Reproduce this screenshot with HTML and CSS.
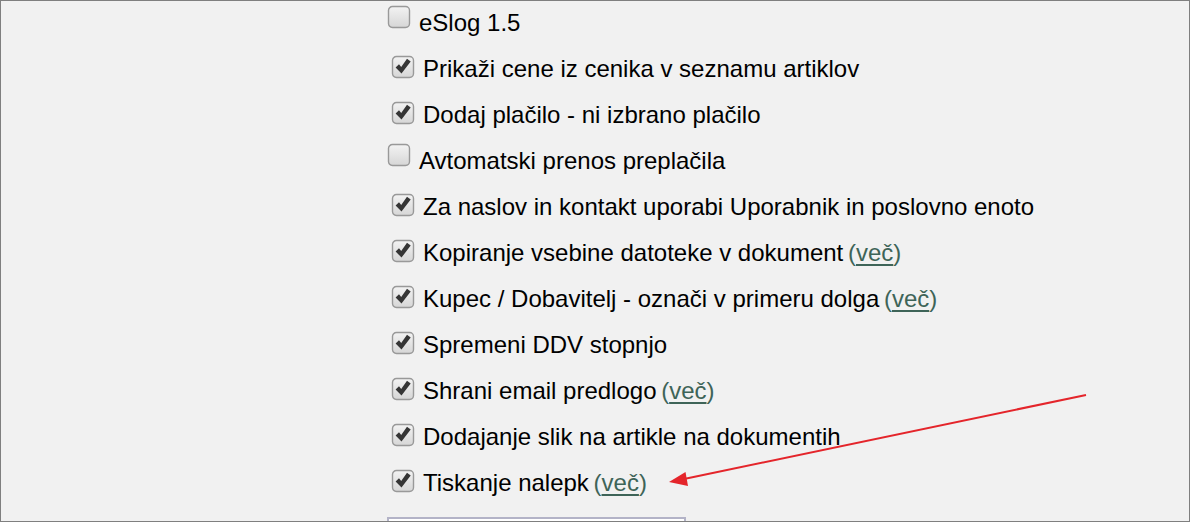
FILE: index.html
```html
<!DOCTYPE html>
<html lang="sl">
<head>
<meta charset="utf-8">
<title>Nastavitve</title>
<link rel="stylesheet" href="styles.css">
</head>
<body>
<div class="frame">
  <ul class="options">
    <li class="opt off"><svg class="cb" viewBox="0 0 24 24"><use href="#box"/></svg><span>eSlog 1.5</span></li>
    <li class="opt on"><svg class="cb" viewBox="0 0 24 24"><use href="#box"/><use href="#tick"/></svg><span>Prikaži cene iz cenika v seznamu artiklov</span></li>
    <li class="opt on"><svg class="cb" viewBox="0 0 24 24"><use href="#box"/><use href="#tick"/></svg><span>Dodaj plačilo - ni izbrano plačilo</span></li>
    <li class="opt off"><svg class="cb" viewBox="0 0 24 24"><use href="#box"/></svg><span>Avtomatski prenos preplačila</span></li>
    <li class="opt on"><svg class="cb" viewBox="0 0 24 24"><use href="#box"/><use href="#tick"/></svg><span>Za naslov in kontakt uporabi Uporabnik in poslovno enoto</span></li>
    <li class="opt on"><svg class="cb" viewBox="0 0 24 24"><use href="#box"/><use href="#tick"/></svg><span>Kopiranje vsebine datoteke v dokument <a class="more" href="#">(<u>več</u>)</a></span></li>
    <li class="opt on"><svg class="cb" viewBox="0 0 24 24"><use href="#box"/><use href="#tick"/></svg><span>Kupec / Dobavitelj - označi v primeru dolga <a class="more" href="#">(<u>več</u>)</a></span></li>
    <li class="opt on"><svg class="cb" viewBox="0 0 24 24"><use href="#box"/><use href="#tick"/></svg><span>Spremeni DDV stopnjo</span></li>
    <li class="opt on"><svg class="cb" viewBox="0 0 24 24"><use href="#box"/><use href="#tick"/></svg><span>Shrani email predlogo <a class="more" href="#">(<u>več</u>)</a></span></li>
    <li class="opt on"><svg class="cb" viewBox="0 0 24 24"><use href="#box"/><use href="#tick"/></svg><span>Dodajanje slik na artikle na dokumentih</span></li>
    <li class="opt on"><svg class="cb" viewBox="0 0 24 24"><use href="#box"/><use href="#tick"/></svg><span>Tiskanje nalepk <a class="more" href="#">(<u>več</u>)</a></span></li>
  </ul>
  <div class="field"></div>
  <svg class="arrow" viewBox="0 0 1190 522" width="1190" height="522">
    <line x1="1086" y1="395" x2="684" y2="479" stroke="#e4252b" stroke-width="2"/>
    <polygon points="669,482 685.5,472 688,486" fill="#e4252b"/>
  </svg>
</div>
<svg width="0" height="0" class="defs">
  <defs>
    <linearGradient id="g" x1="0" y1="0" x2="0" y2="1">
      <stop offset="0" stop-color="#f3f3f3"/>
      <stop offset="1" stop-color="#d6d6d6"/>
    </linearGradient>
    <g id="box">
      <rect x="1" y="1" width="22" height="22" rx="4" fill="#cfcfcf" opacity="0.5"/>
      <rect x="1.5" y="1.5" width="21" height="21" rx="4" fill="url(#g)" stroke="#999" stroke-width="1.4"/>
    </g>
    <path id="tick" d="M4.6 12.4 L8 9.3 L10.2 12.1 L16 3.7 L19.7 6.5 L10.5 18.6 Z" fill="#353535"/>
  </defs>
</svg>
</body>
</html>
```
FILE: styles.css
```css
html, body {
  margin: 0;
  padding: 0;
  background: #f1f1f1;
}
body {
  width: 1190px;
  height: 522px;
  overflow: hidden;
  font-family: "Liberation Sans", Arial, sans-serif;
}
.frame {
  position: relative;
  box-sizing: border-box;
  height: 522px;
  border: 1px solid #7f7f7f;
  overflow: hidden;
  padding-left: 386px;
}
.options {
  list-style: none;
  margin: -1px 0 0 0;
  padding: 0;
}
.opt {
  display: flex;
  align-items: flex-start;
  height: 46px;
  font-size: 24px;
  line-height: 46px;
  color: #000;
  white-space: nowrap;
}
.cb {
  width: 24px;
  height: 24px;
  flex: none;
}
.opt.off .cb {
  margin: 5px 8px 0 0;
}
.opt.on .cb {
  margin: 9px 8px 0 4px;
}
.more {
  margin-left: -2px;
  color: #3e6458;
  text-decoration: none;
}
.more u {
  text-decoration-thickness: 2px;
  text-underline-offset: 3px;
}
.field {
  margin-top: 11px;
  box-sizing: border-box;
  width: 299px;
  height: 40px;
  border: 2px solid #b3b3c7;
  background: #fff;
}
.arrow {
  position: absolute;
  left: -1px;
  top: -1px;
  pointer-events: none;
}
.defs {
  position: absolute;
}
```
